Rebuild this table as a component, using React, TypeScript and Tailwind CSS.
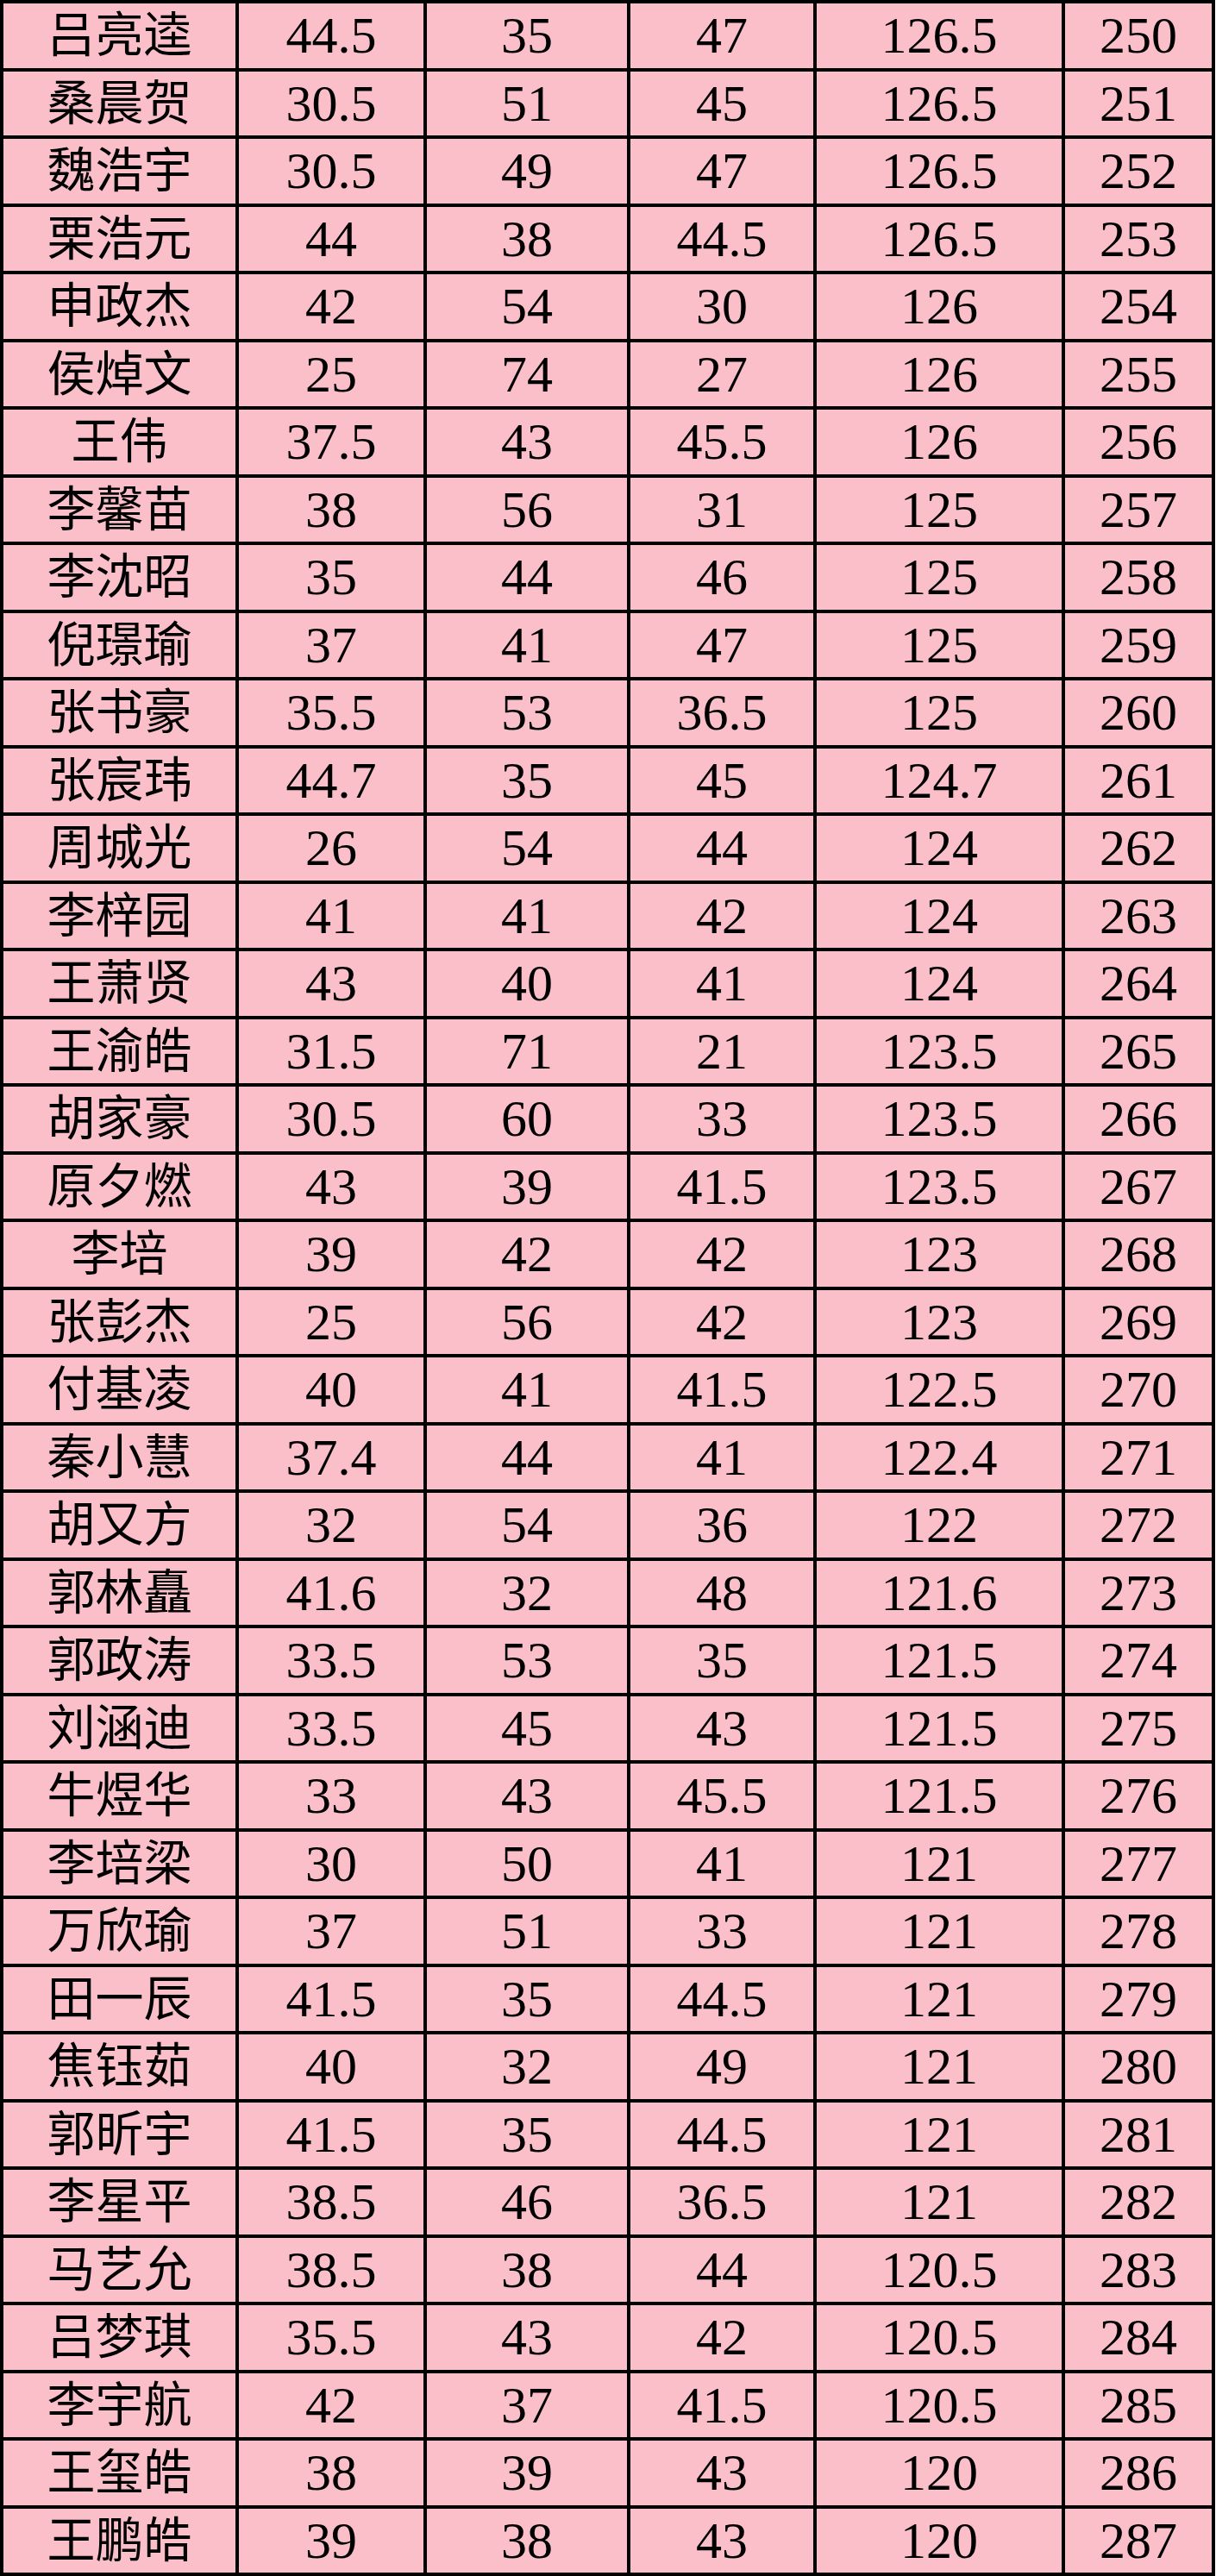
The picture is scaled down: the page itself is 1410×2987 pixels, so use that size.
import React from 'react'

type Row = [string, string, string, string, string, string]

const rows: Row[] = [
  ['吕亮逵', '44.5', '35', '47', '126.5', '250'],
  ['桑晨贺', '30.5', '51', '45', '126.5', '251'],
  ['魏浩宇', '30.5', '49', '47', '126.5', '252'],
  ['栗浩元', '44', '38', '44.5', '126.5', '253'],
  ['申政杰', '42', '54', '30', '126', '254'],
  ['侯焯文', '25', '74', '27', '126', '255'],
  ['王伟', '37.5', '43', '45.5', '126', '256'],
  ['李馨苗', '38', '56', '31', '125', '257'],
  ['李沈昭', '35', '44', '46', '125', '258'],
  ['倪璟瑜', '37', '41', '47', '125', '259'],
  ['张书豪', '35.5', '53', '36.5', '125', '260'],
  ['张宸玮', '44.7', '35', '45', '124.7', '261'],
  ['周城光', '26', '54', '44', '124', '262'],
  ['李梓园', '41', '41', '42', '124', '263'],
  ['王萧贤', '43', '40', '41', '124', '264'],
  ['王渝皓', '31.5', '71', '21', '123.5', '265'],
  ['胡家豪', '30.5', '60', '33', '123.5', '266'],
  ['原夕燃', '43', '39', '41.5', '123.5', '267'],
  ['李培', '39', '42', '42', '123', '268'],
  ['张彭杰', '25', '56', '42', '123', '269'],
  ['付基凌', '40', '41', '41.5', '122.5', '270'],
  ['秦小慧', '37.4', '44', '41', '122.4', '271'],
  ['胡又方', '32', '54', '36', '122', '272'],
  ['郭林矗', '41.6', '32', '48', '121.6', '273'],
  ['郭政涛', '33.5', '53', '35', '121.5', '274'],
  ['刘涵迪', '33.5', '45', '43', '121.5', '275'],
  ['牛煜华', '33', '43', '45.5', '121.5', '276'],
  ['李培梁', '30', '50', '41', '121', '277'],
  ['万欣瑜', '37', '51', '33', '121', '278'],
  ['田一辰', '41.5', '35', '44.5', '121', '279'],
  ['焦钰茹', '40', '32', '49', '121', '280'],
  ['郭昕宇', '41.5', '35', '44.5', '121', '281'],
  ['李星平', '38.5', '46', '36.5', '121', '282'],
  ['马艺允', '38.5', '38', '44', '120.5', '283'],
  ['吕梦琪', '35.5', '43', '42', '120.5', '284'],
  ['李宇航', '42', '37', '41.5', '120.5', '285'],
  ['王玺皓', '38', '39', '43', '120', '286'],
  ['王鹏皓', '39', '38', '43', '120', '287'],
]

export default function App() {
  return (
    <div className="w-[1410px] bg-white">
      {/* score table: black gaps act as the grid lines */}
      <div
        className="grid w-[1409px] grid-cols-[269px_214px_232px_212px_284px_170px] gap-[4px] bg-black p-[4px] text-black"
        style={{ fontFamily: '"Liberation Serif", "Noto Sans CJK SC", serif' }}
      >
        {rows.map((r, i) => (
          <React.Fragment key={i}>
            {r.map((cell, j) => (
              <div
                key={j}
                className={
                  j === 0
                    ? 'flex h-[74.5px] items-center justify-center bg-[#fbbfca] text-[56px] leading-none'
                    : 'flex h-[74.5px] items-center justify-center bg-[#fbbfca] text-[60px] leading-none'
                }
              >
                {cell}
              </div>
            ))}
          </React.Fragment>
        ))}
      </div>
    </div>
  )
}
